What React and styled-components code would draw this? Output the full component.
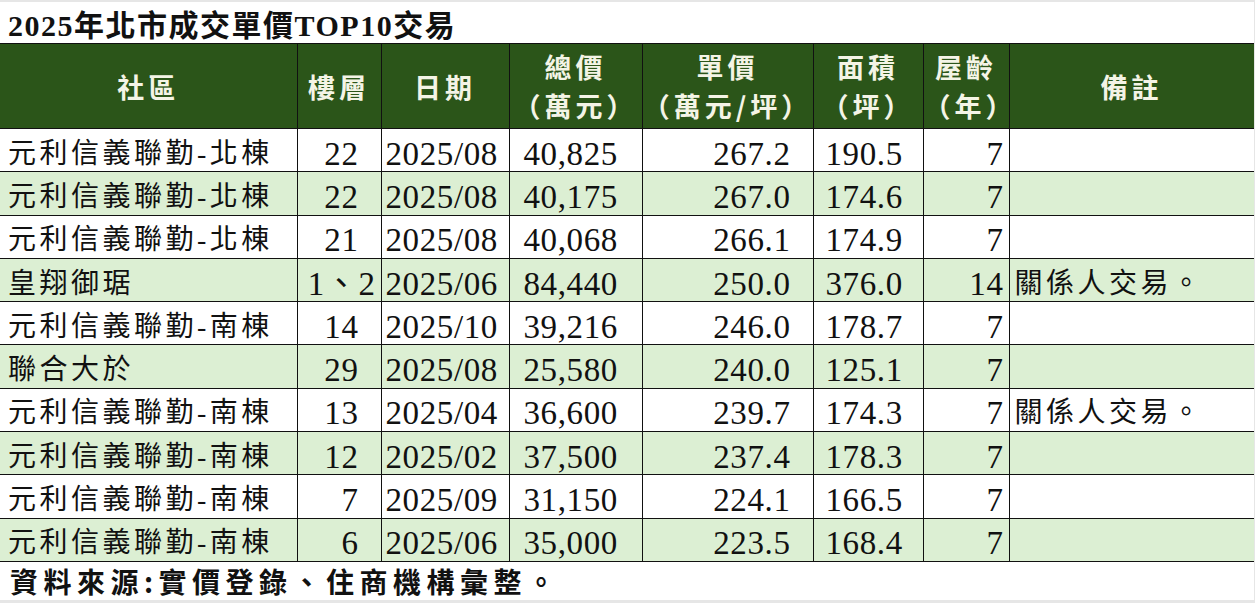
import React from "react";
import styled, { createGlobalStyle } from "styled-components";

const GlobalStyle = createGlobalStyle`
  html, body {
    margin: 0;
    padding: 0;
    background: #e6e6e6;
  }
  body {
    font-family: "Liberation Serif", "Noto Sans CJK TC", serif;
    color: #111;
  }
`;

const rows = [
  { name: "元利信義聯勤-北棟", floor: "22", date: "2025/08", total: "40,825", unit: "267.2", area: "190.5", age: "7", note: "" },
  { name: "元利信義聯勤-北棟", floor: "22", date: "2025/08", total: "40,175", unit: "267.0", area: "174.6", age: "7", note: "" },
  { name: "元利信義聯勤-北棟", floor: "21", date: "2025/08", total: "40,068", unit: "266.1", area: "174.9", age: "7", note: "" },
  { name: "皇翔御琚", floor: "1、2", date: "2025/06", total: "84,440", unit: "250.0", area: "376.0", age: "14", note: "關係人交易。" },
  { name: "元利信義聯勤-南棟", floor: "14", date: "2025/10", total: "39,216", unit: "246.0", area: "178.7", age: "7", note: "" },
  { name: "聯合大於", floor: "29", date: "2025/08", total: "25,580", unit: "240.0", area: "125.1", age: "7", note: "" },
  { name: "元利信義聯勤-南棟", floor: "13", date: "2025/04", total: "36,600", unit: "239.7", area: "174.3", age: "7", note: "關係人交易。" },
  { name: "元利信義聯勤-南棟", floor: "12", date: "2025/02", total: "37,500", unit: "237.4", area: "178.3", age: "7", note: "" },
  { name: "元利信義聯勤-南棟", floor: "7", date: "2025/09", total: "31,150", unit: "224.1", area: "166.5", age: "7", note: "" },
  { name: "元利信義聯勤-南棟", floor: "6", date: "2025/06", total: "35,000", unit: "223.5", area: "168.4", age: "7", note: "" },
];

// pad: cell padding; textPad: used when the value is text rather than a plain number
const columns = [
  { key: "name", width: 297, align: "left", pad: "0 0 0 8px", cjk: true },
  { key: "floor", width: 84, align: "right", pad: "0 22px 0 0", textPad: "0 5px 0 0" },
  { key: "date", width: 128, align: "left", pad: "0 0 0 4px" },
  { key: "total", width: 133, align: "left", pad: "0 0 0 14px" },
  { key: "unit", width: 171, align: "right", pad: "0 22px 0 0" },
  { key: "area", width: 110, align: "left", pad: "0 0 0 12px" },
  { key: "age", width: 86, align: "right", pad: "0 5px 0 0" },
  { key: "note", width: 245, align: "left", pad: "0 0 0 5px", cjk: true },
];

const headers = [
  ["社區"],
  ["樓層"],
  ["日期"],
  ["總價", "（萬元）"],
  ["單價", "（萬元/坪）"],
  ["面積", "（坪）"],
  ["屋齡", "（年）"],
  ["備註"],
];

const Page = styled.div`
  width: 1254px;
  margin-top: 2px;
  height: 598px;
  background: #fff;
  display: flex;
  flex-direction: column;
  overflow: hidden;
`;

const Title = styled.div`
  height: 41px;
  flex-shrink: 0;
  display: flex;
  align-items: center;
  padding-left: 8px;
  font-size: 30px;
  font-weight: 700;
  letter-spacing: 1.5px;
  color: #111;
`;

const Table = styled.table`
  border-collapse: collapse;
  table-layout: fixed;
  width: 1254px;
  flex-shrink: 0;
`;

const HeadCell = styled.th`
  height: 84px;
  padding: 0;
  background: #2b5519;
  color: #f4f4e6;
  border: 1.5px solid #111;
  border-left: ${(p) => (p.$first ? "none" : "1.5px solid #111")};
  font-family: "Noto Sans CJK TC", sans-serif;
  font-size: 27px;
  font-weight: 700;
  letter-spacing: 4px;
  line-height: 39px;
  text-align: center;
  vertical-align: middle;
`;

const Row = styled.tr`
  background: ${(p) => (p.$shaded ? "#dcefd3" : "#fff")};
`;

const Cell = styled.td`
  box-sizing: border-box;
  height: 43.3px;
  padding: ${(p) => p.$pad};
  padding-top: 7px;
  border: 1.5px solid #111;
  border-left: ${(p) => (p.$first ? "none" : "1.5px solid #111")};
  text-align: ${(p) => p.$align};
  vertical-align: middle;
  white-space: nowrap;
  overflow: hidden;
  font-size: ${(p) => (p.$cjk ? "28px" : "33px")};
  letter-spacing: ${(p) => (p.$cjk ? "3.5px" : "0.6px")};
  line-height: 34px;
  color: #111;
`;

const Footer = styled.div`
  flex: 1;
  display: flex;
  align-items: center;
  padding-left: 10px;
  font-family: "Noto Sans CJK TC", sans-serif;
  font-size: 28px;
  line-height: 1;
  font-weight: 700;
  letter-spacing: 5.5px;
  color: #111;
`;

const isPlainNumber = (v) => /^[\d.,]+$/.test(v);

export default function App() {
  return (
    <>
      <GlobalStyle />
      <Page>
        <Title>2025年北市成交單價TOP10交易</Title>
        <Table>
          <colgroup>
            {columns.map((c) => (
              <col key={c.key} style={{ width: c.width }} />
            ))}
          </colgroup>
          <thead>
            <tr>
              {headers.map((lines, i) => (
                <HeadCell key={i} $first={i === 0}>
                  {lines.map((l, j) => (
                    <div key={j}>{l}</div>
                  ))}
                </HeadCell>
              ))}
            </tr>
          </thead>
          <tbody>
            {rows.map((r, i) => (
              <Row key={i} $shaded={i % 2 === 1}>
                {columns.map((c, j) => (
                  <Cell
                    key={c.key}
                    $first={j === 0}
                    $align={c.align}
                    $pad={c.textPad && !isPlainNumber(r[c.key]) ? c.textPad : c.pad}
                    $cjk={c.cjk}
                  >
                    {r[c.key]}
                  </Cell>
                ))}
              </Row>
            ))}
          </tbody>
        </Table>
        <Footer>資料來源:實價登錄、住商機構彙整。</Footer>
      </Page>
    </>
  );
}
